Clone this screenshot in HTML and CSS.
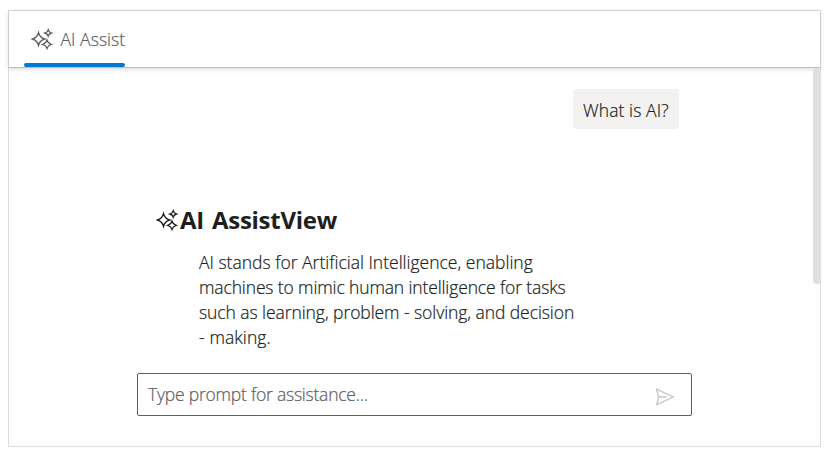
FILE: index.html
```html
<!DOCTYPE html>
<html lang="en">
<head>
<meta charset="utf-8">
<title>AI AssistView</title>
<link rel="stylesheet" href="styles.css">
</head>
<body>
<svg class="defs" aria-hidden="true">
  <symbol id="sparkle" viewBox="0 0 22 22">
    <path d="M7.5 4.8Q8.9 9.6 13.6 11Q8.9 12.4 7.5 17.2Q6.1 12.4 1.4 11Q6.1 9.6 7.5 4.8Z"/>
    <path d="M17.2 1.9Q18 4.3 20.3 5Q18 5.7 17.2 8.1Q16.4 5.7 14.1 5Q16.4 4.3 17.2 1.9Z"/>
    <path d="M16 12.2Q17 15.3 20.2 16.3Q17 17.3 16 20.4Q15 17.3 11.8 16.3Q15 15.3 16 12.2Z"/>
  </symbol>
</svg>
<main class="assist">
  <header class="toolbar">
    <div class="tab"><svg class="spark"><use href="#sparkle"/></svg><span class="tab-text">AI Assist</span></div>
  </header>
  <section class="view">
    <div class="content">
      <div class="prompt"><span>What is AI?</span></div>
      <h1 class="title"><svg class="spark"><use href="#sparkle"/></svg><span>AI AssistView</span></h1>
      <p class="answer">
        <span class="l1">AI stands for Artificial Intelligence, enabling</span>
        <span class="l2">machines to mimic human intelligence for tasks</span>
        <span class="l3">such as learning, problem - solving, and decision</span>
        <span class="l4">- making.</span>
      </p>
      <div class="input">
        <span class="placeholder">Type prompt for assistance...</span>
        <svg class="send" viewBox="0 0 20 18"><path d="M1.5 1.2L18.2 9L1.5 16.8L3.7 9ZM3.7 9H11.5"/></svg>
      </div>
    </div>
    <div class="scrollbar"></div>
  </section>
</main>
</body>
</html>
```
FILE: styles.css
```css
* { box-sizing: border-box; }
body {
  margin: 0;
  padding: 10px 6px 6px 8px;
  background: #fff;
  color: #201f1e;
  font: 300 17.5px/25px "Open Sans", "Noto Sans", sans-serif;
  -webkit-text-stroke: .22px currentColor;
}
.defs { display: none; }
.assist {
  width: 813px;
  height: 437px;
  border: 1px solid #dcdcdc;
  display: flex;
  flex-direction: column;
}
.toolbar {
  height: 57px;
  padding-left: 15px;
  border-bottom: 1px solid #bdbdbd;
  box-shadow: 0 1px 5px rgba(0, 0, 0, .16);
  display: flex;
  flex: none;
}
.tab {
  width: 101px;
  height: 56px;
  padding-left: 7px;
  display: flex;
  align-items: center;
  position: relative;
  color: #605e5c;
  white-space: nowrap;
}
.tab::after {
  content: "";
  position: absolute;
  inset: auto 0 0;
  height: 4px;
  border-radius: 2px;
  background: #0078d4;
}
.spark {
  width: 22px;
  height: 22px;
  flex: none;
  fill: none;
  stroke: currentColor;
  stroke-width: 1.4;
}
.tab .spark { margin-top: -1px; }
.tab-text { margin: 1px 0 0 7.5px; letter-spacing: .05px; }
.view {
  display: flex;
  justify-content: space-between;
  flex: 1;
}
.content {
  width: 555px;
  margin-left: 128px;
  padding-top: 21px;
  display: flex;
  flex-direction: column;
}
.prompt {
  align-self: flex-end;
  width: 106px;
  height: 40px;
  margin-right: 13px;
  padding: 9px 0 0 10px;
  border-radius: 4px;
  background: #f3f2f1;
  letter-spacing: .1px;
  white-space: nowrap;
}
.title {
  margin: 74px 0 0 19px;
  height: 34px;
  display: flex;
  align-items: center;
  font-size: 24px;
  font-weight: 700;
  line-height: 34px;
  letter-spacing: -.27px;
  word-spacing: 2px;
  white-space: nowrap;
  -webkit-text-stroke: 0;
}
.title .spark { margin: -1px 2px 0 0; }
.answer {
  margin: 13px 0 1px 62px;
  height: 100px;
}
.answer span {
  display: block;
  width: max-content;
}
.l2 { letter-spacing: -.13px; }
.l3 { letter-spacing: -.07px; }
.l4 { letter-spacing: .1px; }
.input {
  height: 43px;
  margin-top: 22px;
  padding: 0 16px 0 10px;
  border: 1px solid #605e5c;
  border-radius: 2px;
  display: flex;
  align-items: center;
  justify-content: space-between;
  color: #605e5c;
}
.placeholder { letter-spacing: -.22px; }
.send {
  width: 20px;
  height: 18px;
  margin-top: 4px;
  fill: none;
  stroke: #c8c6c4;
  stroke-width: 1.3;
}
.scrollbar {
  width: 8px;
  height: 216px;
  background: #e1dfdd;
  border-radius: 4px;
  margin-right: -1px;
}
```
